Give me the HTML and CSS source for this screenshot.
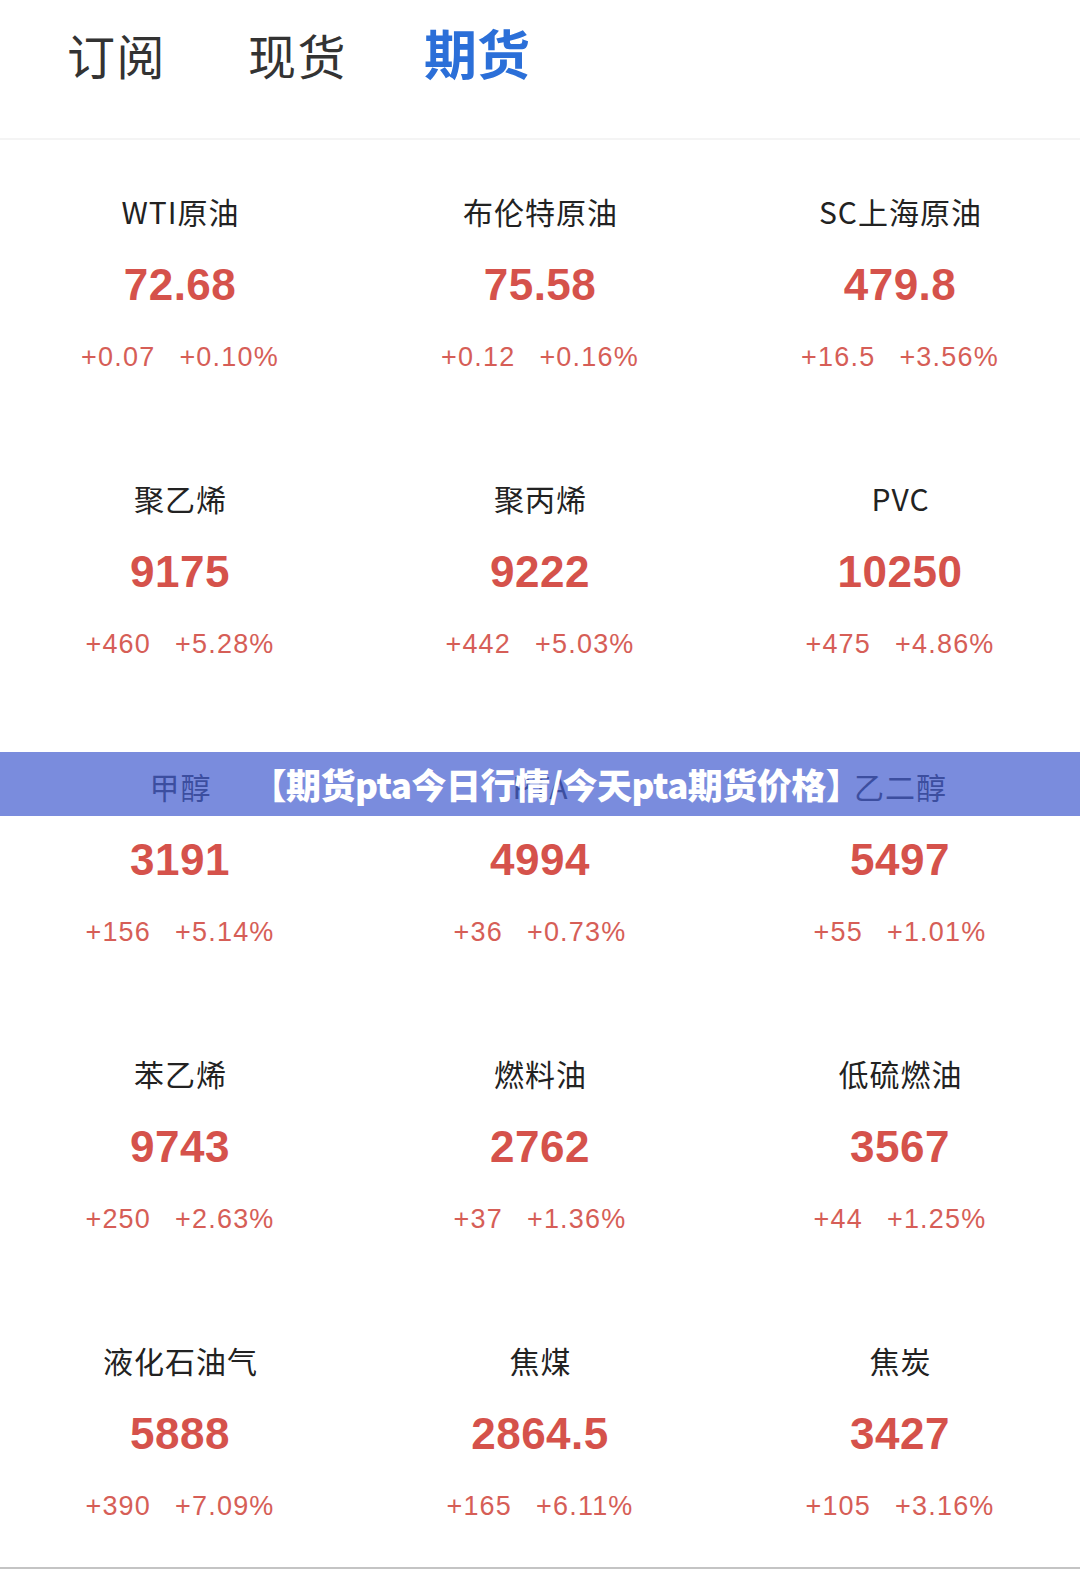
FILE: index.html
```html
<!DOCTYPE html>
<html lang="zh-CN">
<head>
<meta charset="utf-8">
<title>期货</title>
<link rel="stylesheet" href="styles.css">
</head>
<body>
<div class="page">
  <nav class="tabs">
    <span class="tab">订阅</span>
    <span class="tab">现货</span>
    <span class="tab active">期货</span>
  </nav>
  <div class="grid">
    <div class="cell"><div class="name">WTI原油</div><div class="price">72.68</div><div class="chg"><span>+0.07</span><span>+0.10%</span></div></div>
    <div class="cell"><div class="name">布伦特原油</div><div class="price">75.58</div><div class="chg"><span>+0.12</span><span>+0.16%</span></div></div>
    <div class="cell"><div class="name">SC上海原油</div><div class="price">479.8</div><div class="chg"><span>+16.5</span><span>+3.56%</span></div></div>

    <div class="cell"><div class="name">聚乙烯</div><div class="price">9175</div><div class="chg"><span>+460</span><span>+5.28%</span></div></div>
    <div class="cell"><div class="name">聚丙烯</div><div class="price">9222</div><div class="chg"><span>+442</span><span>+5.03%</span></div></div>
    <div class="cell"><div class="name">PVC</div><div class="price">10250</div><div class="chg"><span>+475</span><span>+4.86%</span></div></div>

    <div class="cell"><div class="name">甲醇</div><div class="price">3191</div><div class="chg"><span>+156</span><span>+5.14%</span></div></div>
    <div class="cell"><div class="name">PTA</div><div class="price">4994</div><div class="chg"><span>+36</span><span>+0.73%</span></div></div>
    <div class="cell"><div class="name">乙二醇</div><div class="price">5497</div><div class="chg"><span>+55</span><span>+1.01%</span></div></div>

    <div class="cell"><div class="name">苯乙烯</div><div class="price">9743</div><div class="chg"><span>+250</span><span>+2.63%</span></div></div>
    <div class="cell"><div class="name">燃料油</div><div class="price">2762</div><div class="chg"><span>+37</span><span>+1.36%</span></div></div>
    <div class="cell"><div class="name">低硫燃油</div><div class="price">3567</div><div class="chg"><span>+44</span><span>+1.25%</span></div></div>

    <div class="cell"><div class="name">液化石油气</div><div class="price">5888</div><div class="chg"><span>+390</span><span>+7.09%</span></div></div>
    <div class="cell"><div class="name">焦煤</div><div class="price">2864.5</div><div class="chg"><span>+165</span><span>+6.11%</span></div></div>
    <div class="cell"><div class="name">焦炭</div><div class="price">3427</div><div class="chg"><span>+105</span><span>+3.16%</span></div></div>
  </div>
  <div class="banner"><span class="banner-text">【期货pta今日行情/今天pta期货价格】</span></div>
</div>
</body>
</html>
```
FILE: styles.css
```css
html, body {
  margin: 0;
  padding: 0;
  background: #ffffff;
}
body {
  width: 1080px;
  height: 1572px;
  overflow: hidden;
  font-family: "Noto Sans CJK SC", "Noto Sans", sans-serif;
}
.page {
  position: relative;
  width: 1080px;
  height: 1572px;
}
.tabs {
  height: 140px;
  display: flex;
  align-items: flex-start;
  padding: 22px 0 0 67px;
  box-sizing: border-box;
  gap: 82px;
  border-bottom: 2px solid #f4f4f4;
}
.tab {
  font-size: 48px;
  line-height: 64px;
  color: #333333;
  font-weight: 400;
  letter-spacing: 1.5px;
}
.tab.active {
  font-size: 53px;
  color: #2b6fd8;
  font-weight: 700;
  letter-spacing: 0;
  margin-left: -5px;
  margin-top: -2px;
}
.grid {
  display: grid;
  grid-template-columns: 360px 360px 360px;
  grid-template-rows: repeat(4, 287.25px) 278px;
  border-bottom: 2px solid #c4c4c4;
}
.cell {
  display: flex;
  flex-direction: column;
  align-items: center;
  padding-top: 51px;
  box-sizing: border-box;
}
.name {
  font-size: 30px;
  line-height: 40px;
  height: 40px;
  color: #222222;
  letter-spacing: 1px;
  margin-right: -1px;
}
.price {
  margin-top: 26px;
  font-family: "Liberation Sans", Arial, sans-serif;
  font-weight: 700;
  font-size: 44px;
  line-height: 56px;
  height: 56px;
  color: #d5524b;
  letter-spacing: 0.5px;
}
.chg {
  margin-top: 26px;
  display: flex;
  gap: 24px;
  font-family: "Liberation Sans", Arial, sans-serif;
  font-size: 27px;
  line-height: 36px;
  color: #d65e57;
  letter-spacing: 1.2px;
}
.banner {
  position: absolute;
  left: 0;
  top: 752px;
  width: 1080px;
  height: 64px;
  background: rgba(70, 95, 208, 0.72);
  display: flex;
  align-items: center;
  justify-content: center;
  padding-left: 32px;
  box-sizing: border-box;
}
.banner-text {
  color: #ffffff;
  font-weight: 900;
  font-size: 35px;
  line-height: 40px;
  letter-spacing: -0.5px;
  white-space: nowrap;
}
```
